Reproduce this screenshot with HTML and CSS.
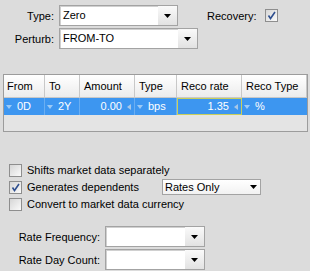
FILE: index.html
```html
<!DOCTYPE html>
<html lang="en">
<head>
  <meta charset="UTF-8" />
  <title>Perturbation</title>
  <link rel="stylesheet" href="styles.css">
</head>
<body>
  <div class="panel">
    <div class="row r1">
      <span class="lbl">Type:</span>
      <div class="combo c-type"><span class="val">Zero</span><span class="btn"><svg width="7" height="4"><polygon points="0,0 7,0 3.5,4" fill="#000"/></svg></span></div>
      <span class="rec">Recovery:</span>
      <span class="chk"><svg width="11" height="11"><path d="M2.5 5.5 L4.5 8.5 L9 2" stroke="#2f4f8f" stroke-width="1.6" fill="none"/></svg></span>
    </div>
    <div class="row">
      <span class="lbl">Perturb:</span>
      <div class="combo c-perturb"><span class="val">FROM-TO</span><span class="btn"><svg width="7" height="4"><polygon points="0,0 7,0 3.5,4" fill="#000"/></svg></span></div>
    </div>

    <div class="grid">
      <div class="th">From</div>
      <div class="th">To</div>
      <div class="th">Amount</div>
      <div class="th">Type</div>
      <div class="th">Reco rate</div>
      <div class="th">Reco Type</div>

      <div class="td"><i class="dn"></i>0D</div>
      <div class="td"><i class="dn"></i>2Y</div>
      <div class="td num">0.00<i class="lt"></i></div>
      <div class="td"><i class="dn"></i>bps</div>
      <div class="td num edit">1.35<i class="lt"></i></div>
      <div class="td"><i class="dn"></i>%</div>
    </div>

    <div class="opts">
      <div class="cbrow">
        <span class="chk"></span>
        <span class="txt">Shifts market data separately</span>
      </div>
      <div class="cbrow tall">
        <span class="chk"><svg width="11" height="11"><path d="M2.5 5.5 L4.5 8.5 L9 2" stroke="#2f4f8f" stroke-width="1.6" fill="none"/></svg></span>
        <span class="txt fixed">Generates dependents</span>
        <div class="mini"><span class="val">Rates Only</span><svg width="7" height="4"><polygon points="0,0 7,0 3.5,4" fill="#000"/></svg></div>
      </div>
      <div class="cbrow">
        <span class="chk"></span>
        <span class="txt">Convert to market data currency</span>
      </div>
    </div>

    <div class="rate">
      <div class="row r1">
        <span class="lbl wide">Rate Frequency:</span>
        <div class="combo c-rate"><span class="val"></span><span class="btn"><svg width="7" height="4"><polygon points="0,0 7,0 3.5,4" fill="#000"/></svg></span></div>
      </div>
      <div class="row">
        <span class="lbl wide">Rate Day Count:</span>
        <div class="combo c-rate"><span class="val"></span><span class="btn"><svg width="7" height="4"><polygon points="0,0 7,0 3.5,4" fill="#000"/></svg></span></div>
      </div>
    </div>
  </div>
</body>
</html>
```

FILE: styles.css
```css
body { margin: 0; background: #dcdcdc; font-family: "Liberation Sans", Arial, sans-serif; font-size: 11px; color: #000; }
.panel { width: 310px; height: 271px; padding-top: 5px; box-sizing: border-box; overflow: hidden; }
.row { display: flex; align-items: center; height: 21px; }
.r1 { margin-bottom: 2px; }
.lbl { width: 54px; text-align: right; margin-right: 5px; }
.lbl.wide { width: 100px; }

.combo { display: flex; height: 21px; box-sizing: border-box; border: 1px solid #a3a3a3; background: #fff; box-shadow: inset 1px 1px 0 #d0d0d0; }
.combo .val { flex: 1; padding-left: 3px; line-height: 19px; }
.combo .btn { width: 19px; display: flex; align-items: center; justify-content: center; background: linear-gradient(#fafafa, #e2e2e2); }
.c-type { width: 119px; }
.c-perturb { width: 139px; }
.c-rate { width: 100px; }

.rec { margin-left: 29px; }
.chk { width: 13px; height: 13px; box-sizing: border-box; border: 1px solid #8e8e8e; background: linear-gradient(135deg, #d6d6d6, #fafafa); display: inline-flex; align-items: center; justify-content: center; }
.r1 .chk { margin-left: 8px; }

.grid { margin: 25px 0 0 3px; width: 305px; height: 58px; box-sizing: border-box; border: 1px solid #9c9c9c; background: #e4e4e4; display: grid; grid-template-columns: 41px 35px 55px 42px 65px 1fr; grid-template-rows: 23px 17px; align-content: start; }
.th { border-right: 1px solid #c8c8c8; border-bottom: 1px solid #c8c8c8; background: linear-gradient(#ffffff, #ececec); padding-left: 4px; line-height: 22px; }
.th:first-child { padding-left: 3px; }
.th:last-child { border-right: none; }
.td { background: #3d96f0; color: #fff; border-right: 1px solid #6aaef2; display: flex; align-items: center; padding-left: 2px; line-height: 17px; }
.td:last-child { border-right: none; }
.td.num { justify-content: flex-end; padding: 0 3px 0 0; }
.td.edit { border: 1px solid #c9cf5a; }
.dn { width: 0; height: 0; border-left: 3px solid transparent; border-right: 3px solid transparent; border-top: 4px solid #9ccaf6; margin-right: 5px; }
.lt { width: 0; height: 0; border-top: 3px solid transparent; border-bottom: 3px solid transparent; border-right: 4px solid #a8c8e8; margin-left: 5px; }

.opts { margin-top: 30px; }
.cbrow { display: flex; align-items: center; height: 16px; padding-left: 9px; }
.cbrow.tall { height: 18px; }
.cbrow .txt { margin-left: 5px; }
.txt.fixed { width: 135px; }
.mini { width: 99px; height: 16px; box-sizing: border-box; border: 1px solid #a3a3a3; background: linear-gradient(#ffffff, #f2f2f2); display: flex; align-items: center; padding: 0 3px 0 2px; }
.mini .val { flex: 1; }

.rate { margin-top: 14px; }
```
